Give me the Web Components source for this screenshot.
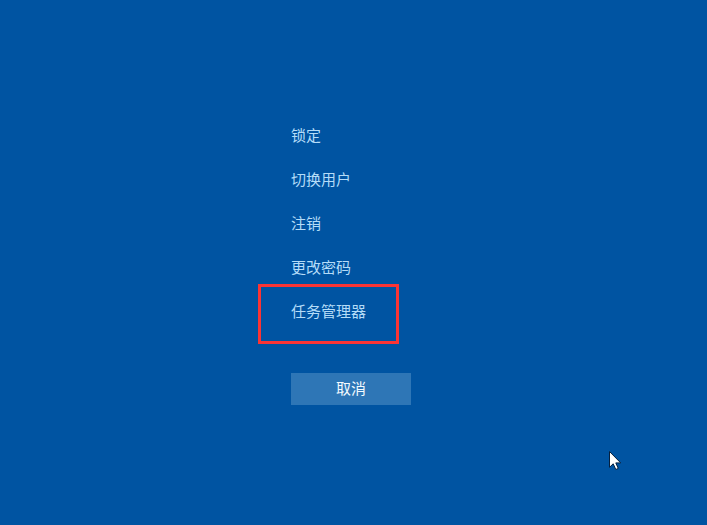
<!DOCTYPE html>
<html lang="zh-CN">
<head>
<meta charset="utf-8">
<meta name="viewport" content="width=device-width, initial-scale=1">
<title>安全选项</title>
<style>
  body {
    margin: 0;
    background: #0054a2;
    color: #b4dcf8;
    font-family: "Noto Sans CJK SC", sans-serif;
    font-size: 15px;
  }
</style>
</head>
<body>
<security-screen>
  <security-option>锁定</security-option>
  <security-option>切换用户</security-option>
  <security-option>注销</security-option>
  <security-option>更改密码</security-option>
  <security-option highlighted>任务管理器</security-option>
  <cancel-button slot="footer">取消</cancel-button>
  <mouse-pointer slot="overlay"></mouse-pointer>
</security-screen>

<script>
class SecurityScreen extends HTMLElement {
  constructor() {
    super();

    this.attachShadow({ mode: "open" });
    this.shadowRoot.innerHTML = `
      <style>
        :host {
          display: grid;
          place-items: center;
          position: relative;
          box-sizing: border-box;
          min-height: 100vh;
          padding: 0 5px 6px 0;
        }
        main {
          display: flex;
          flex-direction: column;
          gap: 39px;
          width: 120px;
        }
        nav {
          display: flex;
          flex-direction: column;
        }
      </style>
      <main>
        <nav aria-label="安全选项"><slot></slot></nav>
        <slot name="footer"></slot>
      </main>
      <slot name="overlay"></slot>
    `;
  }
}

class SecurityOption extends HTMLElement {
  constructor() {
    super();

    this.attachShadow({ mode: "open" });
    this.shadowRoot.innerHTML = `
      <style>
        :host {
          display: block;
          position: relative;
        }
        button {
          display: block;
          width: 100%;
          height: 44px;
          padding: 0 0 2px;
          border: 0;
          background: none;
          color: inherit;
          font: inherit;
          line-height: 24px;
          text-align: left;
          white-space: nowrap;
        }
        button:hover {
          color: #fff;
        }
        /* red frame drawn around the option */
        :host([highlighted])::after {
          content: "";
          position: absolute;
          top: -6px;
          left: -33px;
          box-sizing: border-box;
          width: 141px;
          height: 60px;
          border: 3px solid #fb3434;
          pointer-events: none;
        }
      </style>
      <button type="button"><slot></slot></button>
    `;
  }
}

class CancelButton extends HTMLElement {
  constructor() {
    super();

    this.attachShadow({ mode: "open" });
    this.shadowRoot.innerHTML = `
      <style>
        :host {
          display: block;
        }
        button {
          display: block;
          width: 100%;
          height: 32px;
          padding: 0 0 2px;
          border: 0;
          background: #2e76b6;
          color: #f2faff;
          font: inherit;
          line-height: 24px;
        }
      </style>
      <button type="button"><slot></slot></button>
    `;
  }
}

class MousePointer extends HTMLElement {
  constructor() {
    super();

    this.attachShadow({ mode: "open" });
    this.shadowRoot.innerHTML = `
      <style>
        :host {
          position: absolute;
          top: 450px;
          left: 608px;
          pointer-events: none;
        }
        svg {
          display: block;
        }
      </style>
      <svg width="14" height="21" viewBox="0 0 14 21" aria-hidden="true">
        <path d="M1.5 1.5V17.3L5.2 13.8L7.8 19.5L10.3 18.4L7.8 12.9H12.7Z"
          fill="#fff" stroke="#05203f" stroke-width="1"/>
      </svg>
    `;
  }
}

customElements.define("security-screen", SecurityScreen);
customElements.define("security-option", SecurityOption);
customElements.define("cancel-button", CancelButton);
customElements.define("mouse-pointer", MousePointer);
</script>
</body>
</html>
